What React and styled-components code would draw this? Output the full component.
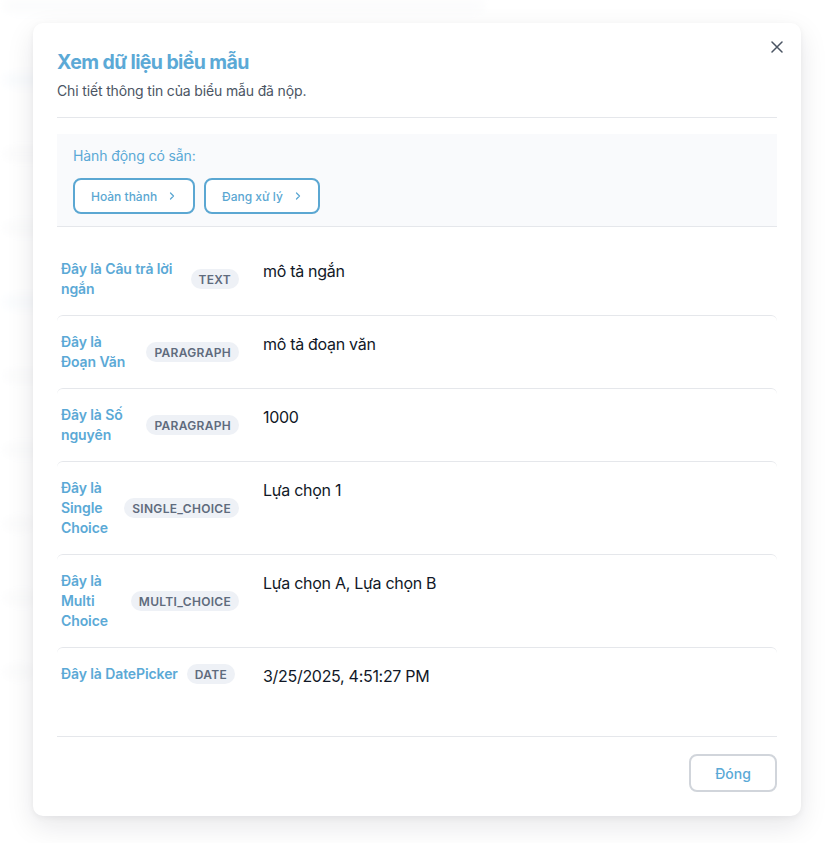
import React from 'react'
import styled, { createGlobalStyle } from 'styled-components'

const GlobalStyle = createGlobalStyle`
  html, body {
    margin: 0;
    padding: 0;
    background: #ffffff;
    font-family: Inter, "Noto Sans", "Liberation Sans", sans-serif;
  }
  * { box-sizing: border-box; }
`

const fields = [
  { label: 'Đây là Câu trả lời ngắn', type: 'TEXT', value: 'mô tả ngắn' },
  { label: 'Đây là Đoạn Văn', type: 'PARAGRAPH', value: 'mô tả đoạn văn' },
  { label: 'Đây là Số nguyên', type: 'PARAGRAPH', value: '1000' },
  { label: 'Đây là Single Choice', type: 'SINGLE_CHOICE', value: 'Lựa chọn 1' },
  { label: 'Đây là Multi Choice', type: 'MULTI_CHOICE', value: 'Lựa chọn A, Lựa chọn B' },
  { label: 'Đây là DatePicker', type: 'DATE', value: '3/25/2025, 4:51:27 PM' },
]

const bgRows = [
  { w: 480, tint: '#eceff3' },
  { w: 120, tint: '#e3eef8' },
  { w: 220, tint: '#f0f0f2' },
  { w: 90, tint: '#eef0f3' },
  { w: 260, tint: '#e6eff8' },
  { w: 160, tint: '#f0f1f4' },
  { w: 40, tint: '#eff0f2' },
  { w: 30, tint: '#eff0f2' },
  { w: 36, tint: '#eff0f2' },
  { w: 30, tint: '#eff0f2' },
]

const Page = styled.div`
  position: relative;
  width: 836px;
  height: 843px;
  overflow: hidden;
`

const BgPage = styled.div`
  display: flex;
  flex-direction: column;
  gap: 62px;
  padding: 0 0 0 4px;
  filter: blur(5px);
  opacity: 0.55;
`

const BgBar = styled.div`
  height: 12px;
  border-radius: 4px;
  background: ${p => p.$tint};
  width: ${p => p.$w}px;
`

const Overlay = styled.div`
  position: absolute;
  inset: 0;
  background: rgba(255, 255, 255, 0.6);
  display: flex;
  justify-content: center;
  align-items: flex-start;
  padding: 23px 2px 0 0;
`

const Modal = styled.div`
  position: relative;
  width: 768px;
  background: #ffffff;
  border-radius: 10px;
  box-shadow: 0 10px 28px rgba(15, 23, 42, 0.1), 0 2px 6px rgba(15, 23, 42, 0.05);
  padding: 25px 24px 24px;
  display: flex;
  flex-direction: column;
`

const CloseButton = styled.button`
  position: absolute;
  top: 12px;
  right: 12px;
  width: 24px;
  height: 24px;
  border: none;
  background: none;
  padding: 0;
  display: flex;
  align-items: center;
  justify-content: center;
  color: #4b5563;
  cursor: pointer;
`

const Title = styled.h2`
  margin: 0;
  font-size: 19.5px;
  line-height: 28px;
  font-weight: 700;
  color: #5ba9d6;
  letter-spacing: -0.6px;
`

const Subtitle = styled.p`
  margin: 5px 0 0;
  font-size: 14px;
  line-height: 20px;
  color: #4b5563;
  letter-spacing: -0.15px;
`

const Divider = styled.div`
  height: 1px;
  background: #e5e7eb;
  margin-top: ${p => p.$top || 0}px;
`

const ActionBox = styled.div`
  margin-top: 16px;
  background: #f9fafc;
  border-bottom: 1px solid #e5e7eb;
  padding: 12px 16px;
  display: flex;
  flex-direction: column;
  gap: 12px;
`

const ActionLabel = styled.div`
  font-size: 14px;
  line-height: 20px;
  color: #5ba9d6;
  letter-spacing: -0.1px;
`

const ActionRow = styled.div`
  display: flex;
  gap: 9px;
`

const ActionButton = styled.button`
  height: 36px;
  width: ${p => p.$w}px;
  padding: 0 0 0 16px;
  border: 2px solid #5ba7d2;
  border-radius: 8px;
  background: #ffffff;
  color: #5ba7d2;
  font-family: inherit;
  font-size: 12px;
  font-weight: 500;
  display: flex;
  align-items: center;
  gap: 9px;
  cursor: pointer;
`

const List = styled.div`
  margin-top: 16px;
  display: flex;
  flex-direction: column;
`

const Row = styled.div`
  display: flex;
  align-items: flex-start;
  gap: 24px;
  padding: 16px 4px;
  border-top: ${p => (p.$first ? 'none' : '1px solid #e5e7eb')};
  border-radius: 6px;
`

const LabelCell = styled.div`
  width: 178px;
  flex-shrink: 0;
  display: flex;
  align-items: center;
  gap: 9px;
`

const FieldLabel = styled.div`
  font-size: 14px;
  line-height: 20px;
  font-weight: 600;
  color: #5ba9d6;
  letter-spacing: -0.1px;
`

const Badge = styled.span`
  flex-shrink: 0;
  height: 20px;
  padding: 0 8px;
  border-radius: 10px;
  background: #eef1f6;
  color: #5f6b7d;
  font-size: 12px;
  font-weight: 600;
  letter-spacing: 0.3px;
  display: inline-flex;
  align-items: center;
`

const Value = styled.div`
  font-size: 16px;
  line-height: 24px;
  color: #111827;
  letter-spacing: -0.3px;
`

const Footer = styled.div`
  margin-top: 32px;
  border-top: 1px solid #e5e7eb;
  padding-top: 17px;
  display: flex;
  justify-content: flex-end;
`

const CloseAction = styled.button`
  width: 88px;
  height: 38px;
  border: 2px solid #d1d5db;
  border-radius: 8px;
  background: #ffffff;
  color: #5ba9d6;
  font-family: inherit;
  font-size: 14px;
  font-weight: 500;
  cursor: pointer;
`

const Chevron = () => (
  <svg width="12" height="12" viewBox="0 0 24 24" fill="none" stroke="currentColor" strokeWidth="2.5" strokeLinecap="round" strokeLinejoin="round">
    <path d="m9 18 6-6-6-6" />
  </svg>
)

const CloseIcon = () => (
  <svg width="12" height="12" viewBox="0 0 12 12" fill="none" stroke="currentColor" strokeWidth="1.5" strokeLinecap="round">
    <path d="M1 1l10 10M11 1L1 11" />
  </svg>
)

export default function App() {
  return (
    <>
      <GlobalStyle />
      <Page>
        <BgPage>
          {bgRows.map((r, i) => (
            <BgBar key={i} $w={r.w} $tint={r.tint} />
          ))}
        </BgPage>
        <Overlay>
          <Modal>
            <CloseButton aria-label="close">
              <CloseIcon />
            </CloseButton>
            <Title>Xem dữ liệu biểu mẫu</Title>
            <Subtitle>Chi tiết thông tin của biểu mẫu đã nộp.</Subtitle>
            <Divider $top={16} />
            <ActionBox>
              <ActionLabel>Hành động có sẵn:</ActionLabel>
              <ActionRow>
                <ActionButton $w={122}>Hoàn thành <Chevron /></ActionButton>
                <ActionButton $w={116}>Đang xử lý <Chevron /></ActionButton>
              </ActionRow>
            </ActionBox>
            <List>
              {fields.map((f, i) => (
                <Row key={i} $first={i === 0}>
                  <LabelCell>
                    <FieldLabel>{f.label}</FieldLabel>
                    <Badge>{f.type}</Badge>
                  </LabelCell>
                  <Value>{f.value}</Value>
                </Row>
              ))}
            </List>
            <Footer>
              <CloseAction>Đóng</CloseAction>
            </Footer>
          </Modal>
        </Overlay>
      </Page>
    </>
  )
}
